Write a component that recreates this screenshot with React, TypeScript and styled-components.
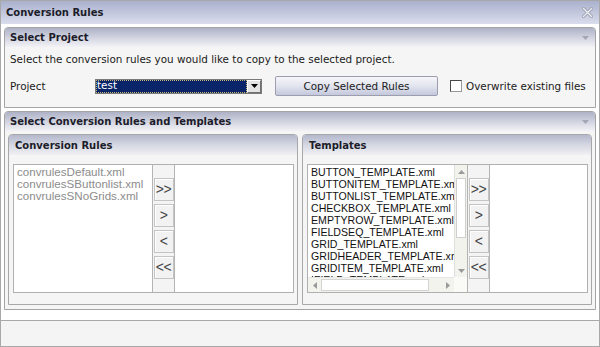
import React from 'react';
import styled, { createGlobalStyle } from 'styled-components';

const GlobalStyle = createGlobalStyle`
  html, body { margin: 0; padding: 0; background: #fff; }
  body { font-family: "DejaVu Sans", Verdana, sans-serif; color: #1a1a1a; }
  * { box-sizing: border-box; }
`;

const Window = styled.div`
  width: 600px;
  height: 347px;
  border: 1px solid #a8a8a8;
  display: flex;
  flex-direction: column;
  background: #fff;
`;

const TitleBar = styled.div`
  height: 23px;
  flex: none;
  display: flex;
  align-items: center;
  justify-content: space-between;
  padding: 0 6px 0 5px;
  background: linear-gradient(#aab1cd, #c4c9de 55%, #dadded);
`;

const Title = styled.div`
  font-weight: bold;
  font-size: 10px;
  color: #1c1c2a;
`;

const Content = styled.div`
  flex: 1;
  display: flex;
  flex-direction: column;
  gap: 3px;
  padding: 3px 3px 0;
`;

const Section = styled.div`
  border: 1px solid #a4a4a4;
  border-radius: 4px 4px 0 0;
  background: #f5f5f5;
  display: flex;
  flex-direction: column;
`;

const SectionHeader = styled.div`
  height: 19px;
  flex: none;
  display: flex;
  align-items: center;
  justify-content: space-between;
  padding: 0 6px 0 5px;
  font-weight: bold;
  font-size: 10px;
  color: #1c1c2a;
  border-radius: 3px 3px 0 0;
  background: linear-gradient(#aeb2c6, #d4d6e2 55%, #f2f2f6);
`;

const SectionBody = styled.div`
  height: 60px;
  padding: 5px 5px 0;
  font-size: 10.4px;
  display: flex;
  flex-direction: column;
  gap: 10px;
`;

const Hint = styled.div`
  line-height: 14px;
`;

const FormRow = styled.div`
  display: flex;
  align-items: center;
  height: 20px;
`;

const Label = styled.div`
  width: 85px;
`;

const SelectBox = styled.div`
  width: 167px;
  height: 15px;
  border: 1px solid #7a7a7a;
  background: #0a246a;
  display: flex;
  align-items: stretch;
`;

const SelectValue = styled.div`
  flex: 1;
  color: #fff;
  font-size: 10.4px;
  line-height: 11px;
  padding-left: 1px;
  outline: 1px dotted #c8b878;
  outline-offset: -1px;
`;

const SelectArrow = styled.div`
  width: 14px;
  background: #e4e4e4;
  border: 1px solid;
  border-color: #fff #707070 #707070 #fff;
  display: flex;
  align-items: center;
  justify-content: center;
`;

const PushButton = styled.button`
  margin-left: 13px;
  width: 163px;
  height: 20px;
  border: 1px solid #9c9eb0;
  border-radius: 2px;
  background: linear-gradient(#f6f6fa, #e2e4ee 50%, #c4c8dc);
  font-family: "DejaVu Sans", Verdana, sans-serif;
  font-size: 10.4px;
  color: #222;
  padding: 0;
`;

const CheckLabel = styled.label`
  margin-left: 12px;
  display: flex;
  align-items: center;
  gap: 4px;
`;

const CheckBox = styled.span`
  width: 12px;
  height: 12px;
  border: 1px solid;
  border-color: #4a4a4a #9a9a9a #9a9a9a #4a4a4a;
  background: #fff;
`;

const PanelsBody = styled.div`
  display: grid;
  grid-template-columns: 290px 290px;
  gap: 4px;
  padding: 3px 3px 4px;
`;

const Panel = styled.div`
  border: 1px solid #a8a8a8;
  border-radius: 4px 4px 0 0;
  display: flex;
  flex-direction: column;
  padding: 0 0 11px;
`;

const PanelHeader = styled.div`
  height: 20px;
  display: flex;
  align-items: center;
  padding-left: 6px;
  font-weight: bold;
  font-size: 10px;
  color: #1c1c2a;
  border-radius: 3px 3px 0 0;
  background: linear-gradient(#b4b8cc, #d8dae4 55%, #f0f0f4);
`;

const Chooser = styled.div<{ $left: number }>`
  margin: 9px 0 0 4px;
  width: 281px;
  height: 129px;
  border: 1px solid #b0b0b0;
  display: grid;
  grid-template-columns: ${p => p.$left}px 23px 1fr;
  background: #fff;
`;

const ListArea = styled.div`
  overflow: hidden;
  padding: 1px 0 0 3px;
`;

const Item = styled.div<{ $muted?: boolean }>`
  font-family: "Liberation Sans", Arial, sans-serif;
  font-size: ${p => (p.$muted ? '11.6px' : '10.6px')};
  line-height: 12px;
  height: 12px;
  white-space: nowrap;
  color: ${p => (p.$muted ? '#8c8c8c' : '#111')};
`;

const ButtonColumn = styled.div`
  background: #f4f4f4;
  border-left: 1px solid #b4b4b4;
  border-right: 1px solid #b4b4b4;
  display: flex;
  flex-direction: column;
  align-items: center;
  justify-content: center;
  gap: 3px;
`;

const MoveButton = styled.button`
  width: 20px;
  height: 23px;
  padding: 0 0 1px;
  border: 1px solid #c4c4c4;
  background: #f2f2f2;
  box-shadow: inset 1px 1px 0 #fff;
  font-family: "Liberation Sans", Arial, sans-serif;
  font-size: 14px;
  letter-spacing: -0.5px;
  color: #444;
  display: flex;
  align-items: center;
  justify-content: center;
`;

const EmptyList = styled.div`
  background: #fff;
`;

const ScrollList = styled.div`
  display: grid;
  grid-template-columns: 1fr 13px;
  grid-template-rows: 1fr 15px;
  overflow: hidden;
`;

const VScroll = styled.div`
  display: flex;
  flex-direction: column;
  background: #f3f3ee;
  border-left: 1px solid #e0e0e0;
`;

const ScrollArrow = styled.div`
  height: 13px;
  display: flex;
  align-items: center;
  justify-content: center;
  flex: none;
`;

const VThumb = styled.div`
  height: 60px;
  margin: 0 1px;
  background: #fff;
  border: 1px solid #cfcfcf;
  flex: none;
`;

const Spacer = styled.div`
  flex: 1;
`;

const HScroll = styled.div`
  display: flex;
  align-items: stretch;
  background: #f3f3ee;
  border-top: 1px solid #e6e6e6;
`;

const HArrow = styled.div`
  width: 13px;
  display: flex;
  align-items: center;
  justify-content: center;
  flex: none;
`;

const HThumb = styled.div`
  width: 108px;
  margin: 1px 0;
  background: #fff;
  border: 1px solid #d4d4d4;
  flex: none;
`;

const Corner = styled.div`
  background: #fafaf6;
`;

const Footer = styled.div`
  height: 26px;
  flex: none;
  border-top: 1px solid #a8a8a8;
  background: #f4f4f4;
`;

const Tri = ({ dir, color = '#9a9a9a' }: { dir: 'up' | 'down' | 'left' | 'right'; color?: string }) => {
  const pts = {
    up: '0,4 3.5,0 7,4',
    down: '0,0 7,0 3.5,4',
    left: '4,0 4,7 0,3.5',
    right: '0,0 0,7 4,3.5',
  }[dir];
  const w = dir === 'up' || dir === 'down' ? 7 : 4;
  const h = dir === 'up' || dir === 'down' ? 4 : 7;
  return (
    <svg width={w} height={h} viewBox={`0 0 ${w} ${h}`}>
      <polygon points={pts} fill={color} />
    </svg>
  );
};

const CloseIcon = () => (
  <svg width="11" height="11" viewBox="0 0 11 11">
    <path d="M1.5 1.5 L9.5 9.5 M9.5 1.5 L1.5 9.5" stroke="#a4a8b8" strokeWidth="3.2" strokeLinecap="square" />
    <path d="M1.5 1.5 L9.5 9.5 M9.5 1.5 L1.5 9.5" stroke="#eef0f6" strokeWidth="1.2" strokeLinecap="square" />
  </svg>
);

const rules = ['convrulesDefault.xml', 'convrulesSButtonlist.xml', 'convrulesSNoGrids.xml'];
const templates = [
  'BUTTON_TEMPLATE.xml',
  'BUTTONITEM_TEMPLATE.xml',
  'BUTTONLIST_TEMPLATE.xml',
  'CHECKBOX_TEMPLATE.xml',
  'EMPTYROW_TEMPLATE.xml',
  'FIELDSEQ_TEMPLATE.xml',
  'GRID_TEMPLATE.xml',
  'GRIDHEADER_TEMPLATE.xml',
  'GRIDITEM_TEMPLATE.xml',
  'IFIELD_TEMPLATE.xml',
];

const MoveButtons = () => (
  <ButtonColumn>
    <MoveButton>&gt;&gt;</MoveButton>
    <MoveButton>&gt;</MoveButton>
    <MoveButton>&lt;</MoveButton>
    <MoveButton>&lt;&lt;</MoveButton>
  </ButtonColumn>
);

export default function App() {
  return (
    <>
      <GlobalStyle />
      <Window>
        <TitleBar>
          <Title>Conversion Rules</Title>
          <CloseIcon />
        </TitleBar>
        <Content>
          <Section>
            <SectionHeader>
              Select Project
              <Tri dir="down" color="#a4a6b6" />
            </SectionHeader>
            <SectionBody>
              <Hint>Select the conversion rules you would like to copy to the selected project.</Hint>
              <FormRow>
                <Label>Project</Label>
                <SelectBox>
                  <SelectValue>test</SelectValue>
                  <SelectArrow>
                    <Tri dir="down" color="#000" />
                  </SelectArrow>
                </SelectBox>
                <PushButton>Copy Selected Rules</PushButton>
                <CheckLabel>
                  <CheckBox />
                  Overwrite existing files
                </CheckLabel>
              </FormRow>
            </SectionBody>
          </Section>
          <Section>
            <SectionHeader>
              Select Conversion Rules and Templates
              <Tri dir="down" color="#a4a6b6" />
            </SectionHeader>
            <PanelsBody>
              <Panel>
                <PanelHeader>Conversion Rules</PanelHeader>
                <Chooser $left={138}>
                  <ListArea>
                    {rules.map(r => (
                      <Item key={r} $muted>{r}</Item>
                    ))}
                  </ListArea>
                  <MoveButtons />
                  <EmptyList />
                </Chooser>
              </Panel>
              <Panel>
                <PanelHeader>Templates</PanelHeader>
                <Chooser $left={159}>
                  <ScrollList>
                    <ListArea>
                      {templates.map(t => (
                        <Item key={t}>{t}</Item>
                      ))}
                    </ListArea>
                    <VScroll>
                      <ScrollArrow><Tri dir="up" /></ScrollArrow>
                      <VThumb />
                      <Spacer />
                      <ScrollArrow><Tri dir="down" /></ScrollArrow>
                    </VScroll>
                    <HScroll>
                      <HArrow><Tri dir="left" /></HArrow>
                      <HThumb />
                      <Spacer />
                      <HArrow><Tri dir="right" /></HArrow>
                    </HScroll>
                    <Corner />
                  </ScrollList>
                  <MoveButtons />
                  <EmptyList />
                </Chooser>
              </Panel>
            </PanelsBody>
          </Section>
        </Content>
        <Footer />
      </Window>
    </>
  );
}
